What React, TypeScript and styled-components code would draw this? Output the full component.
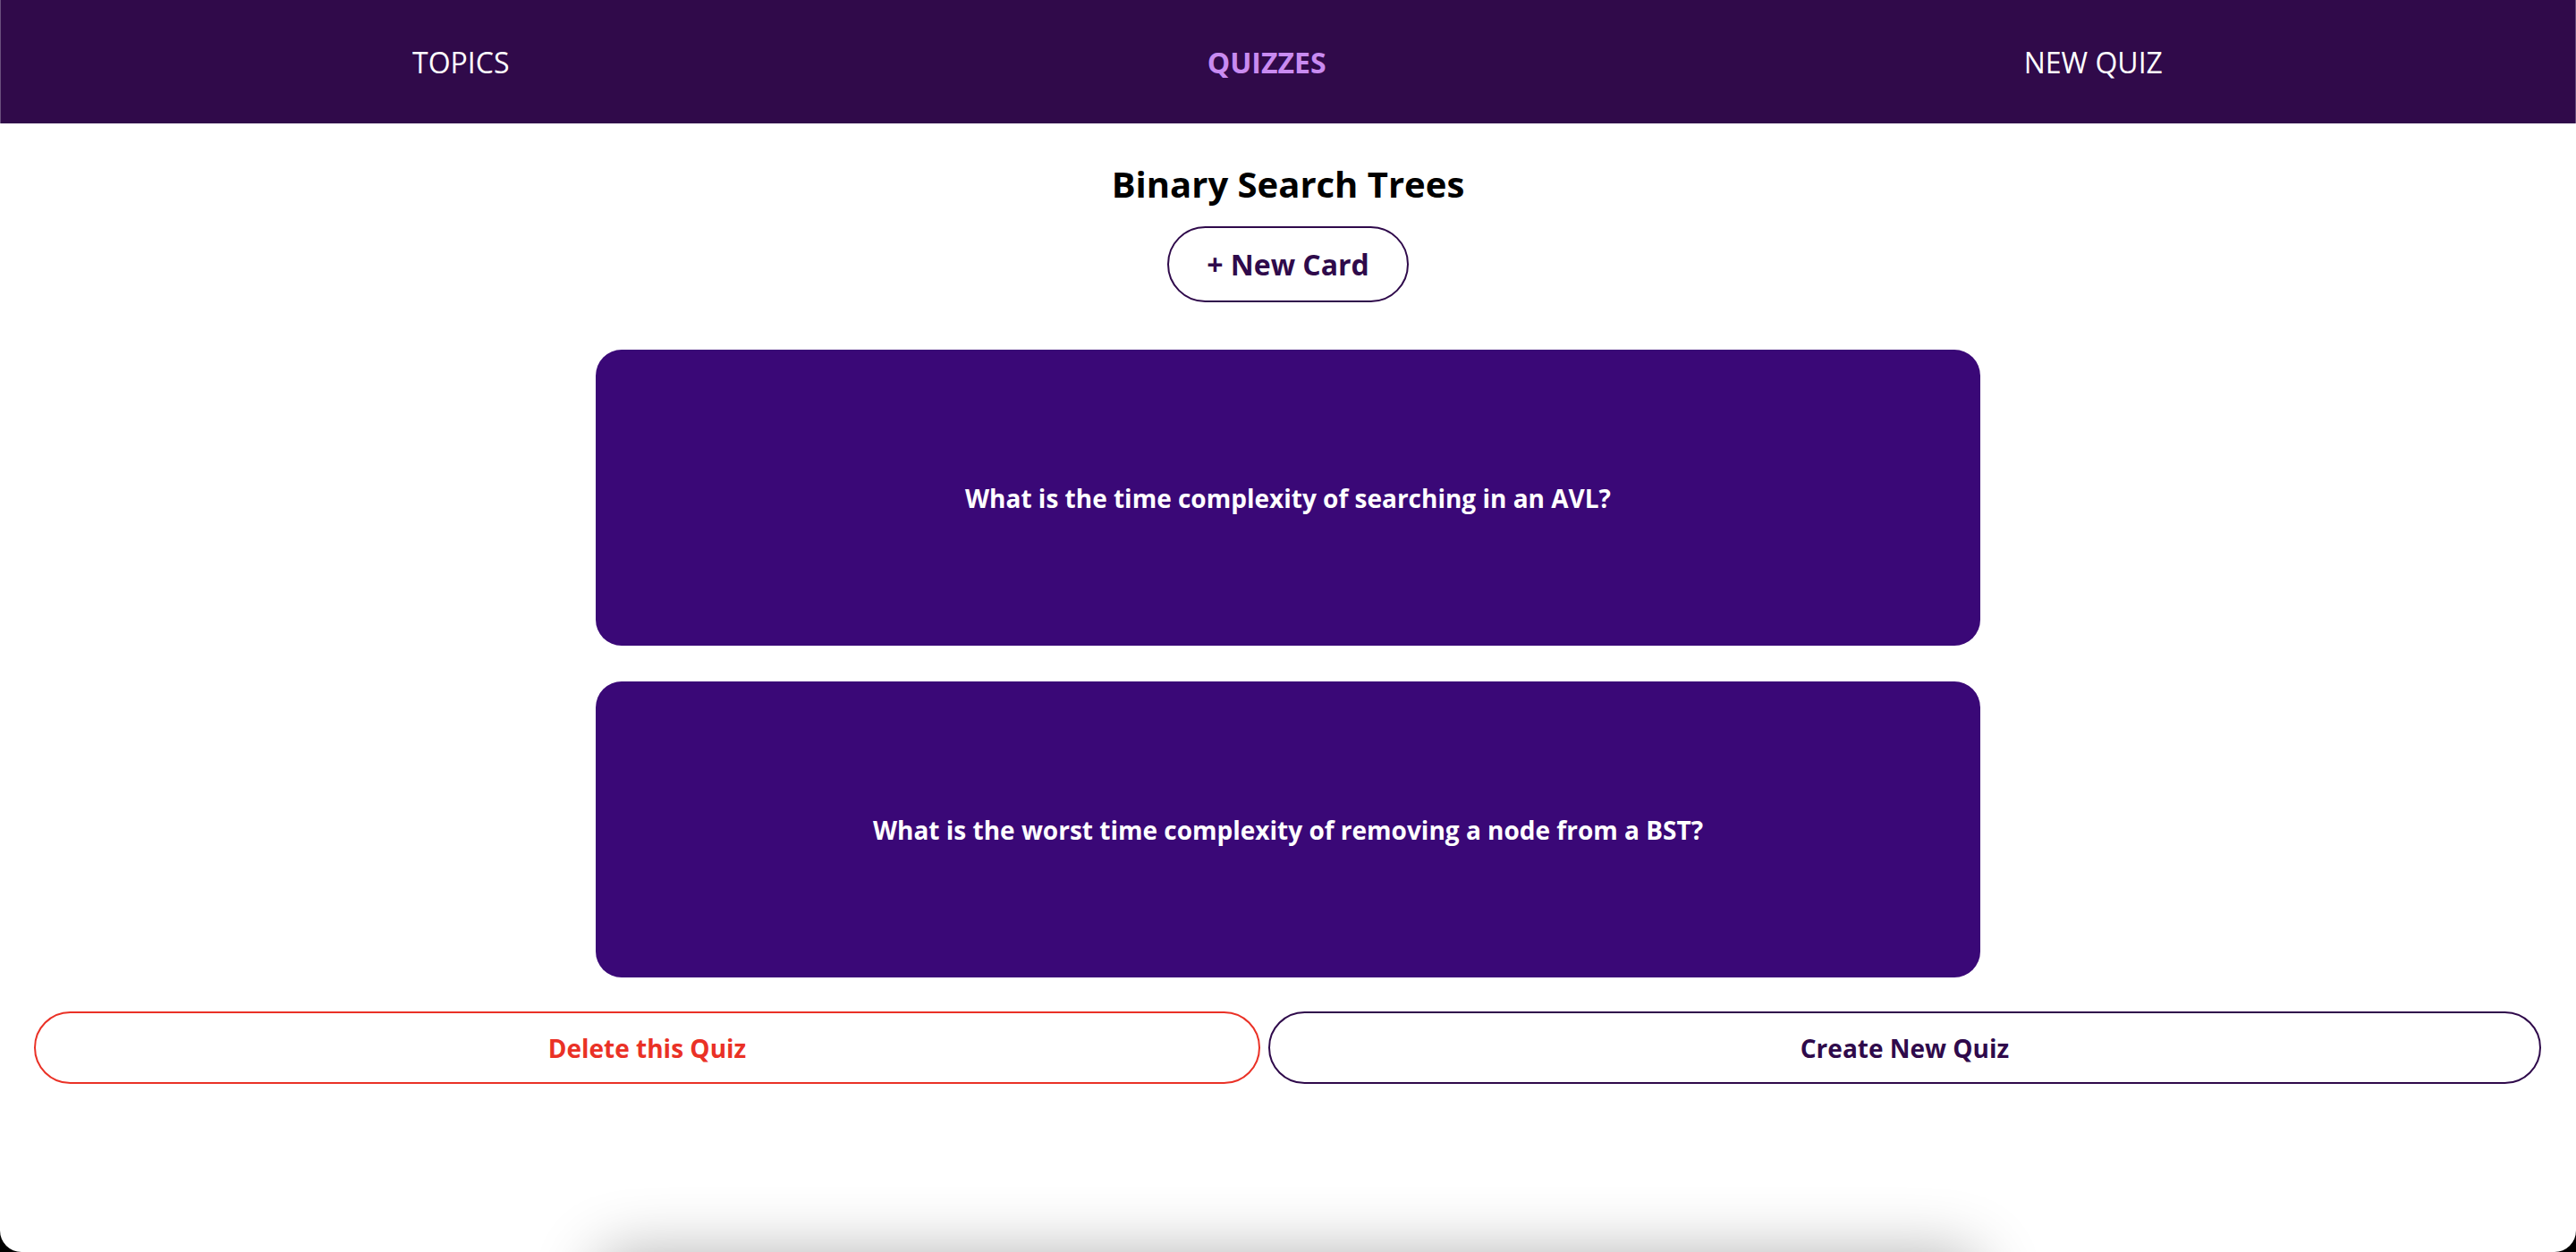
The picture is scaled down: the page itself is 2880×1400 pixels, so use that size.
import React from "react";
import styled, { createGlobalStyle } from "styled-components";

const GlobalStyle = createGlobalStyle`
  html, body {
    margin: 0;
    padding: 0;
    background: #000;
  }
  body {
    font-family: "Open Sans", "Liberation Sans", sans-serif;
  }
  *, *::before, *::after {
    box-sizing: border-box;
  }
`;

const Window = styled.div`
  height: 1400px;
  overflow: hidden;
  background: #fff;
  border-radius: 0 0 24px 24px;
  display: flex;
  flex-direction: column;
`;

const NavBar = styled.nav`
  flex-shrink: 0;
  height: 138px;
  background: #300a4a;
  box-shadow: inset 1px 0 0 rgba(255, 255, 255, 0.28),
    inset -1px 0 0 rgba(255, 255, 255, 0.28);
`;

const NavList = styled.ul`
  list-style: none;
  margin: 0;
  padding: 0 72px 0 71px;
  height: 100%;
  display: flex;
  justify-content: space-around;
  align-items: center;
`;

const NavItem = styled.li`
  display: block;
`;

const NavLink = styled.a<{ $active?: boolean }>`
  font-size: 32px;
  font-weight: ${(p) => (p.$active ? 700 : 400)};
  color: ${(p) => (p.$active ? "#c98bf1" : "#ffffff")};
  text-decoration: none;
  text-transform: uppercase;
`;

const Main = styled.main`
  display: flex;
  flex-direction: column;
  align-items: center;
  padding-top: 41px;
`;

const Title = styled.h2`
  margin: 0;
  font-size: 40px;
  line-height: 54px;
  font-weight: 700;
  color: #000;
`;

const NewCardButton = styled.button`
  margin-top: 20px;
  height: 85px;
  padding: 0 42px;
  border: 2px solid #2f0a4b;
  border-radius: 43px;
  background: #fff;
  color: #2f0a4b;
  font-family: inherit;
  font-size: 32px;
  font-weight: 700;
  line-height: 1;
  cursor: pointer;
`;

const CardList = styled.ul`
  list-style: none;
  margin: 53px 0 0;
  padding: 0;
  width: 1548px;
  display: flex;
  flex-direction: column;
  gap: 40px;
`;

const Card = styled.li`
  height: 331px;
  border-radius: 29px;
  background: #3a0877;
  color: #fff;
  display: flex;
  align-items: center;
  justify-content: center;
  font-size: 28px;
  font-weight: 700;
`;

const ActionRow = styled.div`
  width: 100%;
  margin-top: 38px;
  padding: 0 39px 0 38px;
  display: grid;
  grid-template-columns: 1371px 1fr;
  gap: 9px;
`;

const ActionButton = styled.button<{ $variant: "danger" | "primary" }>`
  height: 81px;
  border: 2px solid ${(p) => (p.$variant === "danger" ? "#ea3126" : "#2f0a4b")};
  border-radius: 41px;
  background: #fff;
  color: ${(p) => (p.$variant === "danger" ? "#ea3126" : "#2f0a4b")};
  font-family: inherit;
  font-size: 28px;
  font-weight: 700;
  cursor: pointer;
`;

const NextPanel = styled.section`
  flex-shrink: 0;
  margin-top: 189px;
  width: 1546px;
  height: 400px;
  background: #fff;
  border-radius: 30px;
  box-shadow: 0 0 70px rgba(0, 0, 0, 0.3);
`;

const cards = [
  "What is the time complexity of searching in an AVL?",
  "What is the worst time complexity of removing a node from a BST?",
];

export default function App() {
  return (
    <>
      <GlobalStyle />
      <Window>
        <NavBar>
          <NavList>
            <NavItem>
              <NavLink href="#topics">Topics</NavLink>
            </NavItem>
            <NavItem>
              <NavLink href="#quizzes" $active>
                Quizzes
              </NavLink>
            </NavItem>
            <NavItem>
              <NavLink href="#new-quiz">New Quiz</NavLink>
            </NavItem>
          </NavList>
        </NavBar>
        <Main>
          <Title>Binary Search Trees</Title>
          <NewCardButton>+ New Card</NewCardButton>
          <CardList>
            {cards.map((c) => (
              <Card key={c}>{c}</Card>
            ))}
          </CardList>
          <ActionRow>
            <ActionButton $variant="danger">Delete this Quiz</ActionButton>
            <ActionButton $variant="primary">Create New Quiz</ActionButton>
          </ActionRow>
          <NextPanel />
        </Main>
      </Window>
    </>
  );
}
